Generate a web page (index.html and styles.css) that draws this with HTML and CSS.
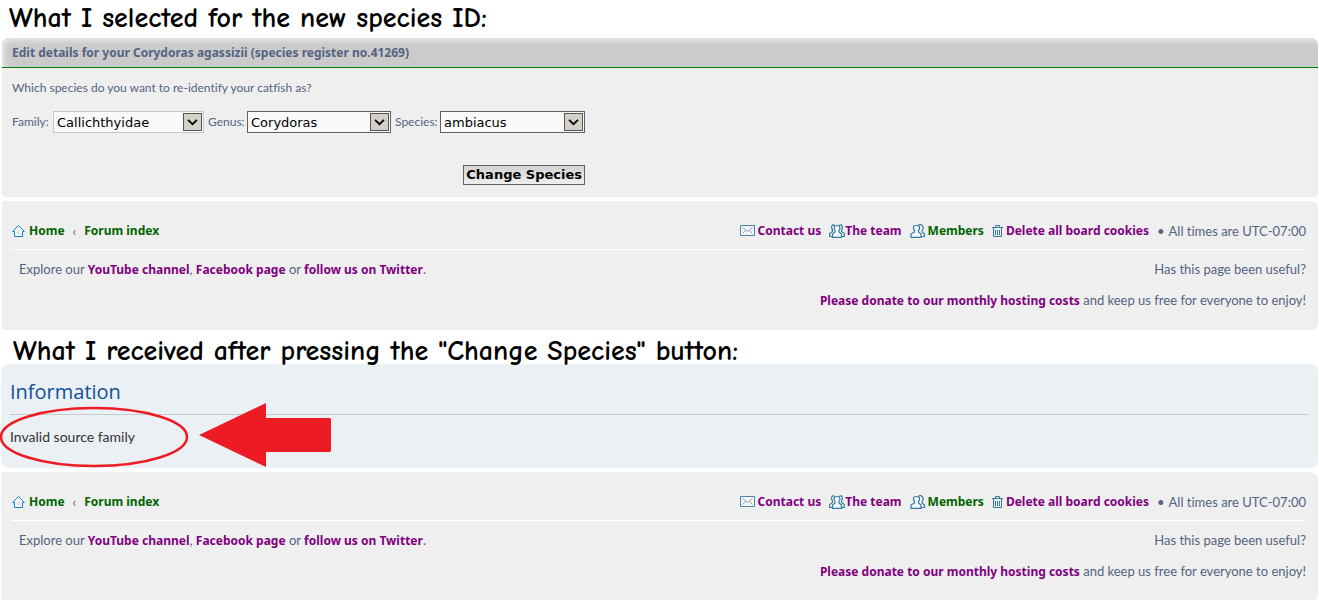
FILE: index.html
```html
<!DOCTYPE html>
<html lang="en">
  <head>
    <meta charset="UTF-8" />
    <meta name="viewport" content="width=device-width, initial-scale=1.0" />
    <title>Change Species</title>
    <link rel="stylesheet" href="styles.css">
  </head>
  <body>
    <!-- shared icons -->
    <svg class="sprite" aria-hidden="true">
      <symbol id="home" viewBox="0 0 14 14">
        <path d="M.7 7.500 6.500 1.500 12.300 7.500H10.500V12.500H2.500V7.500Z" fill="#fafafa" stroke="#0d84bf" />
        <path d="M4.500 8.500 6.500 6 8.500 8.500V10.500H4.500Z" fill="#e2e2e2" />
      </symbol>
      <symbol id="mail" viewBox="0 0 16 12">
        <path d="M.5 .5H14.500V10.500H.5Z" fill="#f5f8fa" stroke="#4b86aa" />
        <path d="M2.500 2.500 7.500 6.500 12.500 2.500M2.500 8.500 5.500 5.500M12.500 8.500 9.500 5.500" fill="none" stroke="#8da3b0" />
      </symbol>
      <symbol id="team" viewBox="0 0 16 14">
        <path d="M6 1.500C3 -.3 1.500 2.500 3.500 6V7.500L.7 9.500V12.500H4M10 1.500C13 -.3 14.500 2.500 12.500 6V7.500L15.300 9.500V12.500H12" fill="#f5f8fa" stroke="#347ba0" stroke-width="1.200" />
        <path d="M8 1.500C4.500 1.500 4.500 4.500 6 6.500V8L3.500 10V13.300H12.500V10L10 8V6.500C11.500 4.500 11.500 1.500 8 1.500Z" fill="#f5f8fa" stroke="#347ba0" stroke-width="1.200" />
      </symbol>
      <symbol id="members" viewBox="0 0 16 14">
        <path d="M8 1.500C11.500 -.8 15 3 12 6.800V8L14.500 10V12.500H10" fill="#f5f8fa" stroke="#347ba0" stroke-width="1.200" />
        <path d="M6.500 1.500C2.500 1.500 3 5 4.500 6.500V8L1 10V13.300H11V10L8.500 8V6.500C10 5 10.500 1.500 6.500 1.500Z" fill="#f5f8fa" stroke="#347ba0" stroke-width="1.200" />
      </symbol>
      <symbol id="trash" viewBox="0 0 12 13">
        <path d="M0 2.500H11M3.500 2V.5H7.500V2M1.500 3V11.500H9.500V3M3.500 5V10M5.500 5V10M7.500 5V10" fill="none" stroke="#347ba0" />
      </symbol>
    </svg>

    <h1 class="caption">What I selected for the new species ID:</h1>
    <main>
      <form class="edit">
        <h2>Edit details for your Corydoras agassizii (species register no.41269)</h2>
        <div class="edit-body">
          <p>Which species do you want to re-identify your catfish as?</p>
          <div class="fields">
            <label for="family">Family:</label>
            <span class="select family"><select id="family"><option>Callichthyidae</option></select><svg viewBox="0 0 18 18"><path d="M4 6.500 9 11.500 14 6.500" /></svg></span>
            <label for="genus">Genus:</label>
            <span class="select"><select id="genus"><option>Corydoras</option></select><svg viewBox="0 0 18 18"><path d="M4 6.500 9 11.500 14 6.500" /></svg></span>
            <label for="species">Species:</label>
            <span class="select"><select id="species"><option>ambiacus</option></select><svg viewBox="0 0 18 18"><path d="M4 6.500 9 11.500 14 6.500" /></svg></span>
            <button type="button">Change Species</button>
          </div>
        </div>
      </form>

      <footer class="footer">
        <nav>
          <div class="crumbs">
            <svg class="icon-home"><use href="#home" /></svg>
            <a class="new" href="#">Home</a>
            <span class="sep">‹</span>
            <a class="new" href="#">Forum index</a>
          </div>
          <ul>
            <li><svg class="icon-mail"><use href="#mail" /></svg><a href="#">Contact us</a></li>
            <li class="team"><svg class="icon-people"><use href="#team" /></svg><a href="#">The team</a></li>
            <li><svg class="icon-people"><use href="#members" /></svg><a class="new" href="#">Members</a></li>
            <li><svg class="icon-trash"><use href="#trash" /></svg><a href="#">Delete all board cookies</a></li>
            <li class="time"><span>•</span> All times are UTC-07:00</li>
          </ul>
        </nav>
        <div class="notes">
          <p class="explore">Explore our <a href="#">YouTube channel</a>, <a href="#">Facebook page</a> or <a href="#">follow us on Twitter</a>.</p>
          <div class="donate">
            <p>Has this page been useful?</p>
            <p><a href="#">Please donate to our monthly hosting costs</a> and keep us free for everyone to enjoy!</p>
          </div>
        </div>
      </footer>
    </main>

    <h1 class="caption second">What I received after pressing the "Change Species" button:</h1>
    <section class="result">
      <div class="info">
        <h2>Information</h2>
        <p>Invalid source family</p>
        <!-- red markup over the message -->
        <svg class="markup" viewBox="0 0 332 66" aria-hidden="true">
          <ellipse cx="94" cy="34" rx="93" ry="29" fill="none" stroke="#ed1c24" stroke-width="2.500" />
          <path d="M199 32 266 0V15H330L331 16V48L330 49H266V64Z" fill="#ed1c24" />
        </svg>
      </div>

      <footer class="footer">
        <nav>
          <div class="crumbs">
            <svg class="icon-home"><use href="#home" /></svg>
            <a class="new" href="#">Home</a>
            <span class="sep">‹</span>
            <a class="new" href="#">Forum index</a>
          </div>
          <ul>
            <li><svg class="icon-mail"><use href="#mail" /></svg><a href="#">Contact us</a></li>
            <li class="team"><svg class="icon-people"><use href="#team" /></svg><a href="#">The team</a></li>
            <li><svg class="icon-people"><use href="#members" /></svg><a class="new" href="#">Members</a></li>
            <li><svg class="icon-trash"><use href="#trash" /></svg><a href="#">Delete all board cookies</a></li>
            <li class="time"><span>•</span> All times are UTC-07:00</li>
          </ul>
        </nav>
        <div class="notes">
          <p class="explore">Explore our <a href="#">YouTube channel</a>, <a href="#">Facebook page</a> or <a href="#">follow us on Twitter</a>.</p>
          <div class="donate">
            <p>Has this page been useful?</p>
            <p><a href="#">Please donate to our monthly hosting costs</a> and keep us free for everyone to enjoy!</p>
          </div>
        </div>
      </footer>
    </section>
  </body>
</html>
```
FILE: styles.css
```css
* {
  box-sizing: border-box;
}

body {
  margin: 0;
  background-color: #fff;
  color: #536482;
  font-family: Lato, "Open Sans", sans-serif;
  font-size: 13px;
  font-variant-ligatures: none;
  line-height: 20px;
}

h1, h2, p, ul {
  margin: 0;
  padding: 0;
}

a {
  color: #800080;
  font-family: "Noto Sans", sans-serif;
  font-size: 12px;
  font-weight: bold;
  text-decoration: none;
}

a.new {
  color: #006400;
}

.sprite {
  display: none;
}

.caption {
  padding: 1px 0 3px 9px;
  color: #000;
  font-family: "Comic Sans MS", "Comic Neue", Lato, sans-serif;
  font-size: 28px;
  line-height: 34px;
  white-space: nowrap;
}

.caption.second {
  position: relative;
  z-index: 1;
  padding: 8px 0 0 13px;
  line-height: 26px;
}

main {
  padding: 0 1px 0 2px;
}

.result {
  padding: 0 1px;
}

.edit {
  background-color: #efefef;
  border-radius: 7px 7px 4px 4px;
}

.edit h2 {
  padding-left: 10px;
  border-bottom: 1px solid #008000;
  border-radius: 7px 7px 0 0;
  background-color: #cbcbcb;
  box-shadow: inset 3px 3px 5px #e6e6e6;
  font-family: "Noto Sans", sans-serif;
  font-size: 12px;
  line-height: 29px;
}

.edit-body {
  padding: 10px 10px 12px;
  font-size: 12px;
}

.fields {
  display: grid;
  grid-template-columns: 37px 151px 35px 144px 41px 145px;
  column-gap: 4px;
  row-gap: 32px;
  align-items: center;
  margin-top: 13px;
}

.fields label {
  font-size: 12px;
  white-space: nowrap;
}

.select {
  display: grid;
  grid-template-columns: 1fr 20px;
  align-items: center;
  height: 22px;
  border: 1px solid #606060;
  background-color: #fafafa;
}

.select.family {
  border-color: #c7c7c7;
}

select {
  grid-area: 1 / 1 / 2 / 3;
  width: 100%;
  height: 20px;
  padding: 0 0 0 3px;
  border: 0;
  background: transparent;
  color: #000;
  font-family: "DejaVu Sans", sans-serif;
  font-size: 13px;
  appearance: none;
}

.select svg {
  grid-area: 1 / 2;
  width: 19px;
  height: 18px;
  border: 1px solid #555;
  background-color: #d4d0c8;
  pointer-events: none;
}

.select path {
  fill: none;
  stroke: #000;
  stroke-width: 2;
}

button {
  grid-column: 5 / 7;
  justify-self: end;
  height: 20px;
  padding: 0 2px;
  border: 1px solid #606060;
  background: linear-gradient(#d2d2d2, #efefef);
  color: #000;
  font-family: "DejaVu Sans", sans-serif;
  font-size: 13px;
  font-weight: bold;
  line-height: 18px;
}

.footer {
  margin-top: 4px;
  padding: 20px 12px 19px 10px;
  border-radius: 3px 7px 7px 3px;
  background-color: #efefef;
}

.result .footer {
  padding-left: 11px;
}

.footer nav {
  display: flex;
  justify-content: space-between;
  padding-bottom: 8px;
  border-bottom: 1px solid #fff;
}

.crumbs, .footer ul, .footer li {
  display: flex;
  align-items: center;
}

.footer ul {
  gap: 8px;
  list-style: none;
}

.footer li {
  gap: 2px;
}

.footer .team {
  gap: 0;
}

.footer .time {
  gap: 4px;
}

.sep {
  padding: 0 8px;
}

.icon-home {
  width: 14px;
  height: 14px;
  margin-right: 3px;
}

.icon-mail {
  width: 16px;
  height: 12px;
}

.icon-people {
  width: 16px;
  height: 14px;
}

.icon-trash {
  width: 12px;
  height: 13px;
}

.notes {
  display: flex;
  justify-content: space-between;
  padding-top: 9px;
}

.explore {
  padding-left: 7px;
}

.donate {
  display: grid;
  gap: 11px;
  text-align: right;
}

.info {
  position: relative;
  padding: 14px 10px 21px 9px;
  border-radius: 7px;
  background-color: #ebf0f4;
}

.info h2 {
  padding-bottom: 8px;
  border-bottom: 1px solid #c5cace;
  color: #115098;
  font-family: "Open Sans", sans-serif;
  font-size: 20px;
  font-weight: normal;
  line-height: 28px;
}

.info p {
  margin-top: 12px;
  color: #333;
  font-size: 14px;
}

.markup {
  position: absolute;
  top: 39px;
  left: -1px;
  width: 332px;
  height: 66px;
}
```
